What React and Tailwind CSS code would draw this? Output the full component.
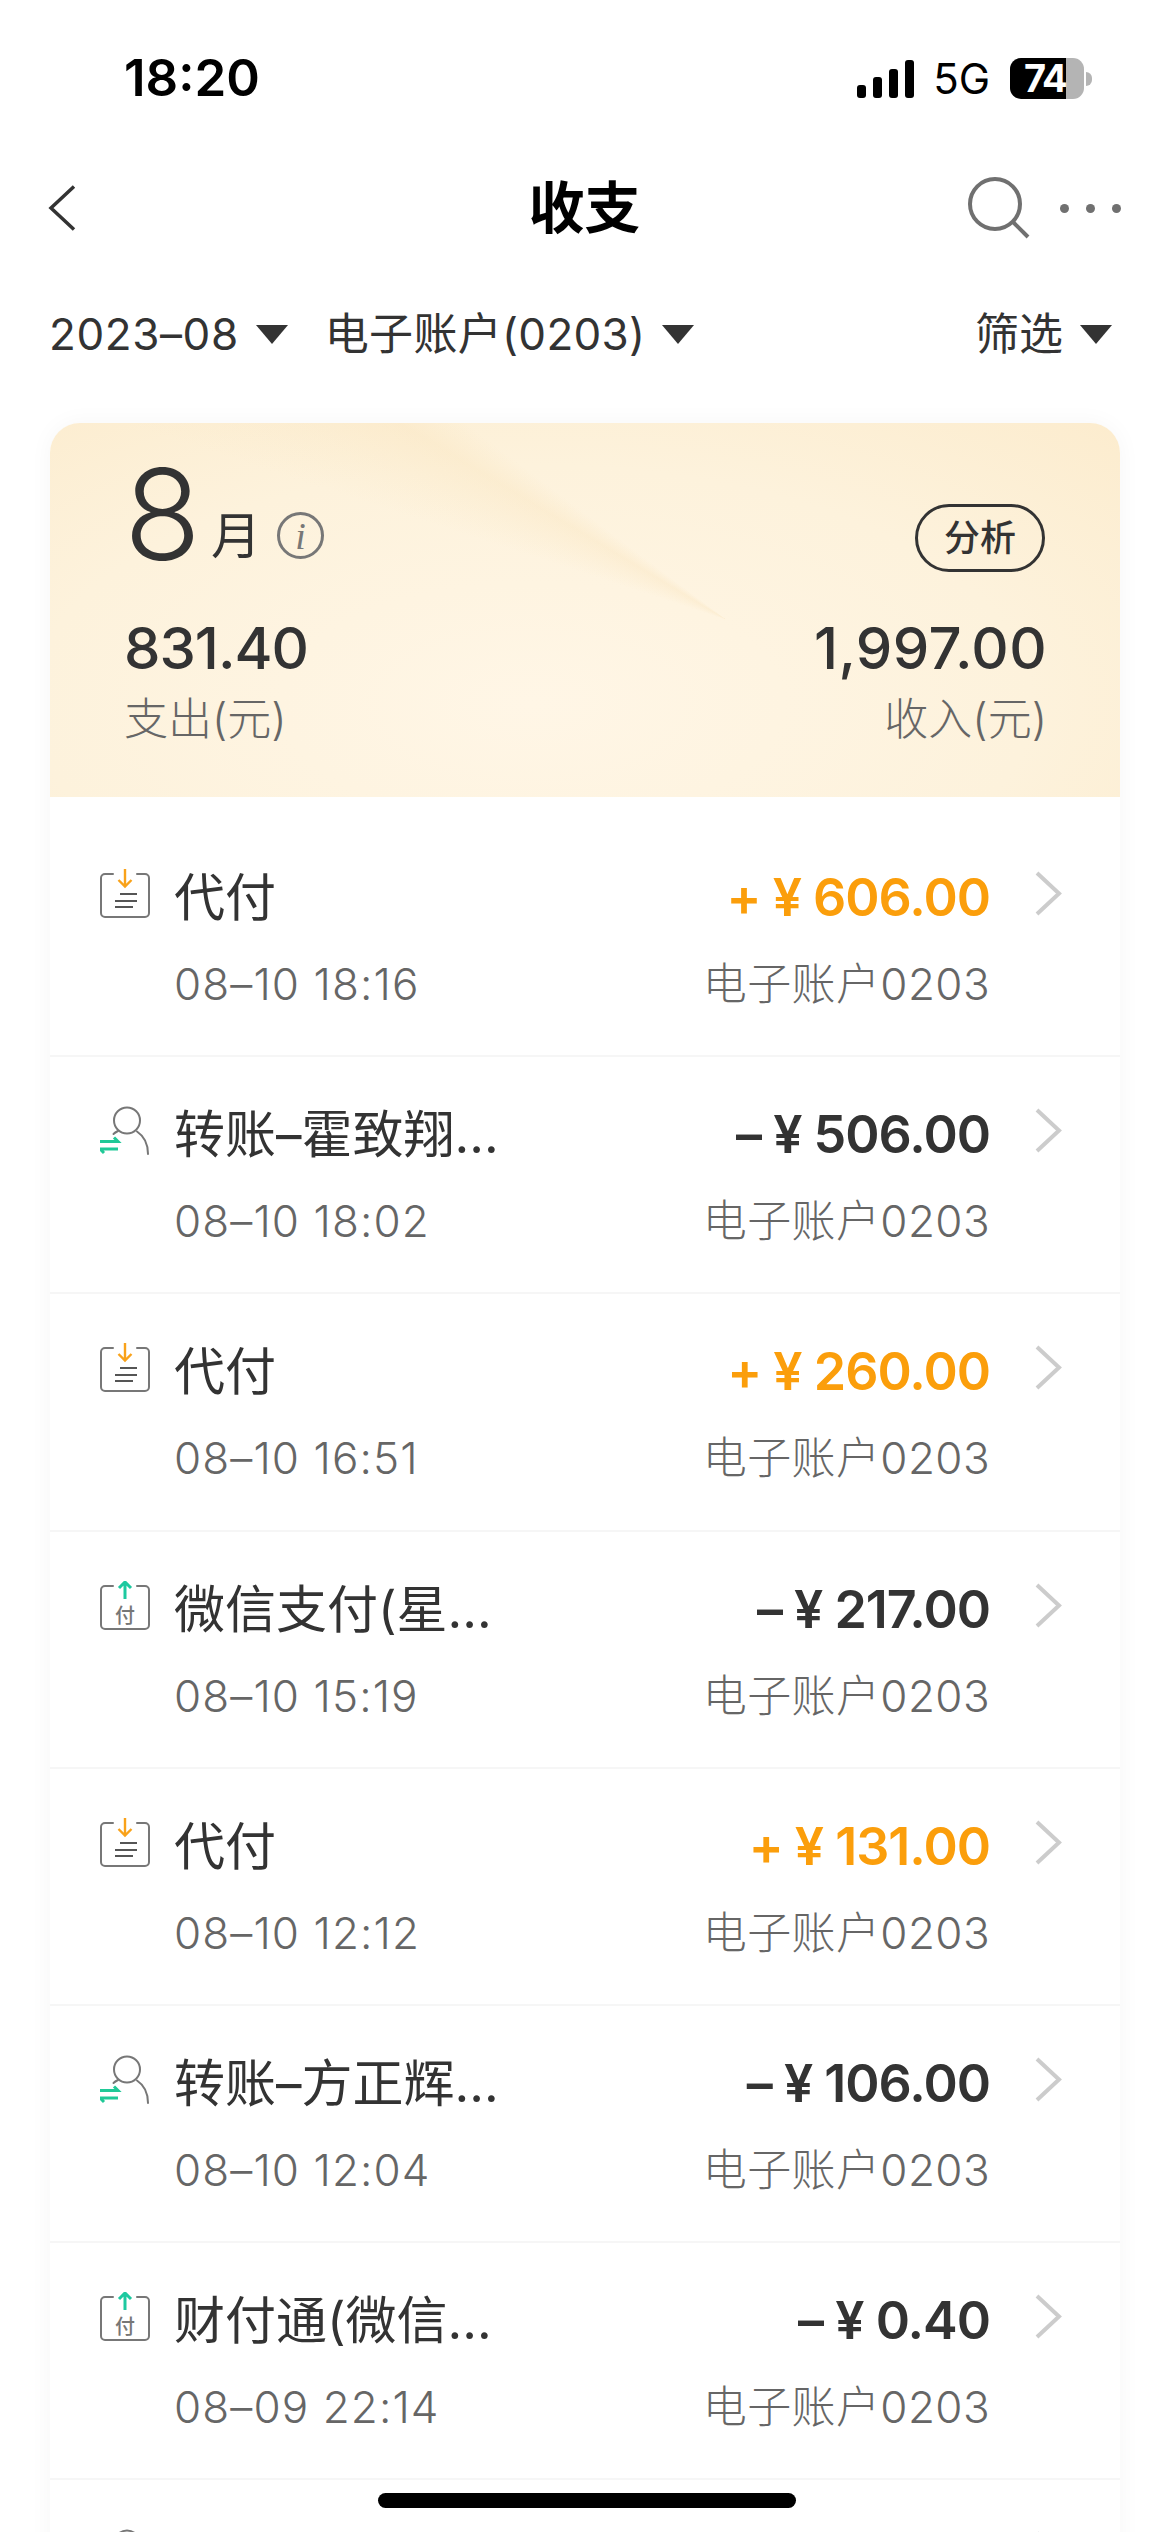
const rows = [
  { icon: 'in', title: '代付', amount: '606.00', sign: '+', time: '08–10 18:16' },
  { icon: 'user', title: '转账–霍致翔...', amount: '506.00', sign: '–', time: '08–10 18:02' },
  { icon: 'in', title: '代付', amount: '260.00', sign: '+', time: '08–10 16:51' },
  { icon: 'pay', title: '微信支付(星...', amount: '217.00', sign: '–', time: '08–10 15:19' },
  { icon: 'in', title: '代付', amount: '131.00', sign: '+', time: '08–10 12:12' },
  { icon: 'user', title: '转账–方正辉...', amount: '106.00', sign: '–', time: '08–10 12:04' },
  { icon: 'pay', title: '财付通(微信...', amount: '0.40', sign: '–', time: '08–09 22:14' },
  { icon: 'user' },
];

function Caret() {
  return <span className="ml-[17px] h-0 w-0 border-x-[16px] border-t-[19px] border-x-transparent border-t-[#333]" />;
}

function RowIcon({ type }) {
  if (type === 'user') {
    return (
      <svg viewBox="0 0 50 50" className="h-[50px] w-[50px]" fill="none">
        <circle cx="27" cy="14.5" r="13" stroke="#777" strokeWidth="2" />
        <path d="M18 25c-2 1-3.500 2-4.500 3M37 25.500c6 4 11 11 11 22.500" stroke="#777" strokeWidth="2" strokeLinecap="round" />
        <path d="M0 35.500h18l-4-4" stroke="#20c997" strokeWidth="3" />
        <path d="M18 43H0l4 4" stroke="#20c997" strokeWidth="3" />
      </svg>
    );
  }
  return (
    <svg viewBox="0 0 50 50" className="h-[50px] w-[50px]" fill="none">
      <path d="M13 5H5a4 4 0 0 0-4 4v35a4 4 0 0 0 4 4h40a4 4 0 0 0 4-4V9a4 4 0 0 0-4-4h-8" stroke="#777" strokeWidth="2" strokeLinecap="round" />
      {type === 'in' ? (
        <>
          <path d="M25 0v17M18.500 11l6.500 6.500 6.500-6.500" stroke="#f9a21a" strokeWidth="2.400" />
          <path d="M20 25h17M15 32h22M15 38h18" stroke="#555" strokeWidth="2" />
        </>
      ) : (
        <>
          <path d="M25 18V1M19 7l6-6 6 6" stroke="#1dc9a0" strokeWidth="3" />
          <text x="25" y="42" textAnchor="middle" fontSize="20" fontWeight="500" fill="#777" fontFamily="'Noto Sans CJK SC', sans-serif">付</text>
        </>
      )}
    </svg>
  );
}

function Row({ row }) {
  const income = row.sign === '+';
  return (
    <div className="flex h-[237.2px] shrink-0 border-b-2 border-[#f6f6f6] pr-[58px] pl-[50px]">
      <div className="mt-[49px] w-[74px] shrink-0">
        <RowIcon type={row.icon} />
      </div>
      <div className="min-w-0 flex-1 pt-[48px]">
        {row.title && (
          <>
            <div className="flex h-[60px] items-center justify-between">
              <span className="text-[51px] leading-[60px] text-[#333]">{row.title}</span>
              <span className={`text-[52px] leading-[60px] font-semibold tracking-[-1px] ${income ? 'text-[#fb9e0b]' : 'text-[#333]'}`}>
                {row.sign} ¥ {row.amount}
              </span>
            </div>
            <div className="mt-[27px] flex h-[58px] items-center justify-between text-[44px] leading-[58px] font-light text-[#666]">
              <span className="tracking-[1.1px]">{row.time}</span>
              <span className="tracking-[0.4px]">电子账户0203</span>
            </div>
          </>
        )}
      </div>
      <svg viewBox="0 0 27 45" className="mt-[51px] ml-[45px] h-[45px] w-[27px] shrink-0" fill="none">
        <path d="M2 2l22 20.500L2 43" stroke="#ccc" strokeWidth="4" />
      </svg>
    </div>
  );
}

export default function App() {
  return (
    <div className="relative flex h-[2532px] w-[1170px] flex-col overflow-hidden bg-white font-['Inter','Noto_Sans_CJK_SC',sans-serif]">
      {/* Status bar */}
      <div className="flex h-[148px] shrink-0 items-start justify-between pt-[56px] pr-[78px] pl-[124px] text-black">
        <span className="text-[51px] leading-[44px] font-semibold">18:20</span>
        <div className="flex items-center gap-[18px] pt-[2px]">
          <svg viewBox="0 0 58 38" className="h-[38px] w-[58px]" fill="#000">
            <rect x="0" y="25" width="9" height="13" rx="3" />
            <rect x="16" y="17" width="9" height="21" rx="3" />
            <rect x="32" y="9" width="9" height="29" rx="3" />
            <rect x="48" y="0" width="9" height="38" rx="3" />
          </svg>
          <span className="mr-[2px] text-[42px] leading-[40px]">5G</span>
          <div className="flex items-center">
            <div className="flex h-[41px] w-[74px] items-center rounded-[11px] bg-[linear-gradient(90deg,#000_56px,#b4b4b4_56px)] pl-[14px]">
              <span className="text-[38px] leading-[41px] font-bold tracking-[-2px] text-white">74</span>
            </div>
            <div className="ml-[2px] h-[14px] w-[6px] rounded-r-full bg-[#b4b4b4]" />
          </div>
        </div>
      </div>

      {/* Nav */}
      <div className="flex h-[120px] shrink-0 items-center pr-[49px] pl-[48px]">
        <div className="flex-1">
          <svg viewBox="0 0 28 46" className="h-[46px] w-[28px]" fill="none">
            <path d="M26 1.500 3 23l23 21.500" stroke="#333" strokeWidth="3.500" />
          </svg>
        </div>
        <span className="text-[56px] leading-[64px] font-bold text-black">收支</span>
        <div className="flex flex-1 items-center justify-end gap-[30px]">
          <svg viewBox="0 0 62 62" className="h-[62px] w-[62px]" fill="none">
            <circle cx="27" cy="27" r="25" stroke="#707070" strokeWidth="4" />
            <path d="M45 45l15 15" stroke="#707070" strokeWidth="4" />
          </svg>
          <div className="flex gap-[17px]">
            <span className="size-[9px] rounded-full bg-[#707070]" />
            <span className="size-[9px] rounded-full bg-[#707070]" />
            <span className="size-[9px] rounded-full bg-[#707070]" />
          </div>
        </div>
      </div>

      {/* Filters */}
      <div className="flex h-[132px] shrink-0 items-center justify-between pr-[58px] pl-[49px] text-[44px] leading-[60px] text-[#333]">
        <div className="flex items-center">
          <span className="tracking-[0.6px]">2023–08</span>
          <Caret />
          <span className="ml-[37px] tracking-[0.3px]">电子账户(0203)</span>
          <Caret />
        </div>
        <div className="flex items-center">
          <span>筛选</span>
          <Caret />
        </div>
      </div>

      {/* Card */}
      <div className="mx-[50px] mt-[23px] shrink-0 overflow-hidden rounded-[30px] bg-white shadow-[0_0_24px_rgba(0,0,0,0.04)]">
        <div className="h-[374px] bg-[conic-gradient(from_288deg_at_677px_197px,rgba(248,224,180,0)_0deg,rgba(248,224,180,0.3)_13deg,rgba(248,224,180,0)_19deg),radial-gradient(ellipse_at_45%_75%,#fff6e6_0%,#fdf2dc_60%,#fcecce_100%)] pt-[39px] pr-[73px] pl-[74px]">
          <div className="flex items-start justify-between">
            <div className="flex h-[104px] items-end">
              <span className="text-[126px] leading-[104px] font-light text-[#333]">8</span>
              <span className="ml-[10px] text-[50px] leading-[60px] text-[#333]">月</span>
              <span className="mb-[7px] ml-[16px] flex size-[47px] items-center justify-center rounded-full border-[3px] border-[#777] font-['Liberation_Serif',serif] text-[38px] leading-none text-[#777] italic">i</span>
            </div>
            <span className="mt-[42px] mr-[2px] flex h-[68px] w-[130px] items-center justify-center rounded-full border-[3px] border-[#333] text-[36px] leading-none font-medium text-[#333]">分析</span>
          </div>
          <div className="mt-[44px] flex justify-between text-[58px] leading-[64px] font-medium text-[#333]">
            <span className="tracking-[-1px]">831.40</span>
            <span className="tracking-[0.4px]">1,997.00</span>
          </div>
          <div className="mt-[9px] flex justify-between text-[44px] leading-[60px] font-light text-[#666]">
            <span>支出(元)</span>
            <span>收入(元)</span>
          </div>
        </div>
        <div className="flex flex-col pt-[23px]">
          {rows.map((row, i) => (
            <Row key={i} row={row} />
          ))}
        </div>
      </div>

      {/* Home indicator */}
      <div className="absolute top-[2493px] left-[378px] h-[15px] w-[418px] rounded-full bg-black" />
    </div>
  );
}
